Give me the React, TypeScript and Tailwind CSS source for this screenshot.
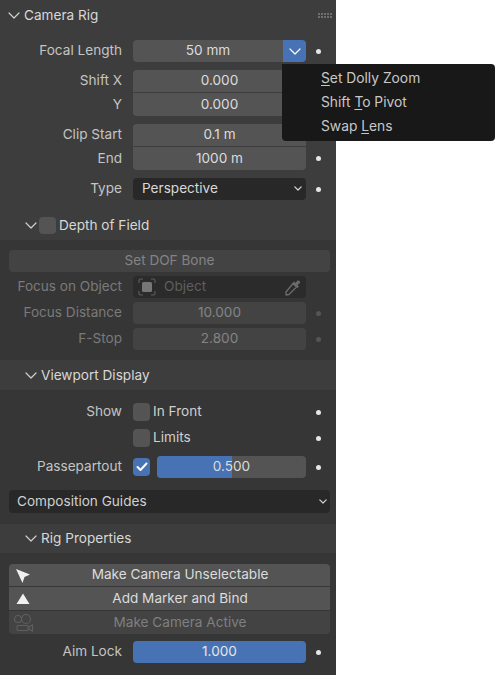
import { ReactNode } from 'react';

function Dot({ dim }: { dim?: boolean }) {
  return (
    <div className="flex w-[24px] justify-center">
      <div className={dim ? 'h-[5px] w-[5px] rounded-full bg-[#555]' : 'h-[5px] w-[5px] rounded-full bg-[#e6e6e6]'} />
    </div>
  );
}

function Chevron({ className }: { className?: string }) {
  return (
    <svg width="12" height="7" viewBox="0 0 12 7" fill="none" className={className}>
      <path d="M1 1 L6 6 L11 1" stroke="currentColor" strokeWidth="1.2" strokeLinecap="round" strokeLinejoin="round" />
    </svg>
  );
}

function SmallChevron() {
  return (
    <svg width="8" height="5" viewBox="0 0 8 5" fill="none">
      <path d="M0.800 0.800 L4 4 L7.200 0.800" stroke="currentColor" strokeWidth="1.200" strokeLinecap="round" strokeLinejoin="round" />
    </svg>
  );
}

function Row({ label, dim, children, dot = true, tall, flat }: { label: string; dim?: boolean; children: ReactNode; dot?: boolean; tall?: boolean; flat?: boolean }) {
  return (
    <div className={tall ? 'flex h-[23px] items-center' : 'flex h-[22px] items-center'}>
      <div className={`w-[122px] text-right ${dim ? 'text-[#7a7a7a]' : 'text-[#c4c4c4]'} ${tall || flat ? '' : 'pb-px'}`}>{label}</div>
      <div className="ml-[11px] h-full w-[173px]">{children}</div>
      {dot ? <Dot dim={dim} /> : null}
    </div>
  );
}

function Field({ value, pos = 'all', dim, flat }: { value: string; pos?: 'all' | 'top' | 'bottom'; dim?: boolean; flat?: boolean }) {
  const radius = pos === 'top' ? 'rounded-t-[4px]' : pos === 'bottom' ? 'rounded-b-[4px]' : 'rounded-[4px]';
  return (
    <div
      className={`flex h-full items-center justify-center ${flat ? '' : 'pb-px'} ${radius} ${dim ? 'bg-[#434343] text-[#838383]' : 'bg-[#545454] text-[#dcdcdc]'}`}
    >
      {value}
    </div>
  );
}

function SubHeader({ children, short }: { children: ReactNode; short?: boolean }) {
  return (
    <div className={`flex items-center bg-[#3d3d3d] pl-[25px] text-[#d8d8d8] ${short ? 'h-[29px]' : 'h-[30px] pt-px'}`}>
      <Chevron className="mr-[4px] text-[#d0d0d0]" />
      {children}
    </div>
  );
}

function Check() {
  return <div className="h-[18px] w-[17px] rounded-[4px] bg-[#545454]" />;
}

function ActionButton({ label, icon, dim, short }: { label: string; icon: ReactNode; dim?: boolean; short?: boolean }) {
  return (
    <div
      className={`relative flex items-center justify-center pl-[21px] ${short ? 'h-[22px] pb-px' : 'h-[23px]'} ${dim ? 'bg-[#434343] text-[#7f7f7f]' : 'bg-[#545454] text-[#dcdcdc]'}`}
    >
      <div className="absolute left-[5px] top-[3px]">{icon}</div>
      {label}
    </div>
  );
}

export default function App() {
  return (
    <div className="relative h-[676px] w-[495px] overflow-hidden bg-white text-[13.6px] leading-none [font-family:Inter,'Liberation_Sans',sans-serif]">
      <div className="h-[675px] w-[336px] rounded-br-[4px] bg-[#3d3d3d]">
        <div className="flex h-[30px] items-center pl-[8px] pr-[4px] pt-px text-[#d8d8d8]">
          <Chevron className="mr-[4px] text-[#d0d0d0]" />
          <span>Camera Rig</span>
          <div className="ml-auto grid grid-cols-5 gap-x-[1px] gap-y-[1px]">
            {[0, 1, 2, 3, 4, 5, 6, 7, 8, 9].map((i) => (
              <div key={i} className="h-[2px] w-[2px] bg-[#6e6e6e]" />
            ))}
          </div>
        </div>

        <div className="mt-[10px]">
          <Row label="Focal Length">
            <div className="flex h-[22px]">
              <div className="flex flex-1 items-center justify-center rounded-l-[4px] bg-[#545454] pb-px text-[#dcdcdc]">50 mm</div>
              <div className="flex w-[23px] items-center justify-center rounded-r-[4px] bg-[#4772b3] text-white">
                <Chevron />
              </div>
            </div>
          </Row>
        </div>
        <div className="mt-[8px]">
          <Row label="Shift X" dot={false}>
            <Field value="0.000" pos="top" />
          </Row>
          <div className="mt-px">
            <Row label="Y" dot={false} tall>
              <Field value="0.000" pos="bottom" flat />
            </Row>
          </div>
        </div>
        <div className="mt-[8px]">
          <Row label="Clip Start" dot={false}>
            <Field value="0.1 m" pos="top" />
          </Row>
          <div className="mt-px">
            <Row label="End" tall>
              <Field value="1000 m" pos="bottom" flat />
            </Row>
          </div>
        </div>
        <div className="mt-[8px]">
          <Row label="Type">
            <div className="flex h-[22px] items-center justify-between rounded-[4px] bg-[#282828] pb-px pl-[9px] pr-[4px] text-[#d8d8d8]">
              <span>Perspective</span>
              <SmallChevron />
            </div>
          </Row>
        </div>

        <div className="mt-[10px]">
          <SubHeader>
            <div className="-ml-[2px] mr-[3px] h-[17px] w-[17px] rounded-[4px] bg-[#545454]" />
            Depth of Field
          </SubHeader>
        </div>

        <div className="h-[120px] bg-[#363636] pt-[10px]">
          <div className="ml-[9px] flex h-[22px] w-[321px] items-center justify-center rounded-[4px] bg-[#434343] pb-px text-[#838383]">Set DOF Bone</div>
          <div className="mt-[4px]">
            <Row label="Focus on Object" dim dot={false}>
              <div className="flex h-full items-center justify-between rounded-[4px] bg-[#2b2b2b] pl-[5px] pr-[4px] text-[#5e5e5e]">
                <div className="flex items-center gap-[8px]">
                  <svg width="18" height="18" viewBox="0 0 18 18" fill="none">
                    <path d="M1 5V2.500A1.500 1.500 0 0 1 2.500 1H5M13 1h2.500A1.500 1.500 0 0 1 17 2.500V5M17 13v2.500a1.500 1.500 0 0 1-1.500 1.500H13M5 17H2.500A1.500 1.500 0 0 1 1 15.500V13" stroke="#5e5e5e" strokeWidth="1.100" />
                    <rect x="4" y="4" width="10" height="10" rx="1.500" fill="#767676" />
                  </svg>
                  <span>Object</span>
                </div>
                <svg width="18" height="18" viewBox="0 0 18 18" fill="none">
                  <path d="M9 5.500 L12.500 9 L5 16.500 L2 17 L2 14 Z" stroke="#6b6b6b" strokeWidth="1.300" strokeLinejoin="round" />
                  <path d="M10 3.500 L11.500 5 L13.500 2.500 A2 2 0 0 1 16 5 L13.500 7 L15 8.500 L13.500 10 L8.500 5 Z" fill="#6b6b6b" />
                </svg>
              </div>
            </Row>
          </div>
          <div className="mt-[4px]">
            <Row label="Focus Distance" dim>
              <Field value="10.000" dim />
            </Row>
          </div>
          <div className="mt-[4px]">
            <Row label="F-Stop" dim>
              <Field value="2.800" dim />
            </Row>
          </div>
        </div>

        <SubHeader>Viewport Display</SubHeader>

        <div className="h-[134px] bg-[#363636] pt-[11px]">
          <Row label="Show">
            <div className="flex h-full items-center gap-[3px] text-[#d0d0d0]">
              <Check />
              <span className="pb-px">In Front</span>
            </div>
          </Row>
          <div className="mt-[4px]">
            <Row label="">
              <div className="flex h-full items-center gap-[3px] text-[#d0d0d0]">
                <Check />
                <span className="pb-px">Limits</span>
              </div>
            </Row>
          </div>
          <div className="mt-[7px]">
            <Row label="Passepartout">
              <div className="flex h-full items-center gap-[7px]">
                <div className="flex h-[18px] w-[17px] items-center justify-center rounded-[4px] bg-[#4772b3]">
                  <svg width="12" height="10" viewBox="0 0 12 10" fill="none">
                    <path d="M1.500 5 L4.500 8 L10.500 1.500" stroke="#fff" strokeWidth="2" strokeLinecap="round" strokeLinejoin="round" />
                  </svg>
                </div>
                <div className="flex h-[22px] flex-1 overflow-hidden rounded-[4px] bg-[#545454]">
                  <div className="relative flex w-full items-center justify-center pb-px text-[#dcdcdc]">
                    <div className="absolute inset-y-0 left-0 w-1/2 bg-[#4772b3]" />
                    <span className="relative">0.500</span>
                  </div>
                </div>
              </div>
            </Row>
          </div>
          <div className="ml-[9px] mt-[12px] flex h-[23px] w-[321px] items-center justify-between rounded-[4px] bg-[#282828] pl-[8px] pr-[3px] text-[#d0d0d0]">
            <span>Composition Guides</span>
            <SmallChevron />
          </div>
        </div>

        <SubHeader short>Rig Properties</SubHeader>

        <div className="h-[122px] bg-[#363636] pt-[11px]">
          <div className="ml-[9px] flex w-[321px] flex-col gap-px overflow-hidden rounded-[4px]">
            <ActionButton
              short
              label="Make Camera Unselectable"
              icon={
                <svg width="18" height="18" viewBox="0 0 18 18">
                  <path d="M2 2 L16 7.500 L10.500 10 L8.500 16 Z" fill="#f0f0f0" />
                </svg>
              }
            />
            <ActionButton
              label="Add Marker and Bind"
              icon={
                <svg width="18" height="18" viewBox="0 0 18 18">
                  <path d="M9 3.500 L15.500 14 L2.500 14 Z" fill="#f0f0f0" />
                </svg>
              }
            />
            <ActionButton
              dim
              label="Make Camera Active"
              icon={
                <svg width="20" height="20" viewBox="0 0 20 20" fill="none" stroke="#5f5f5f" strokeWidth="1.100">
                  <circle cx="4" cy="5" r="3.500" />
                  <circle cx="12" cy="5" r="4.500" />
                  <rect x="3" y="11.500" width="11" height="5" rx="1" />
                  <path d="M14 13.500 L18.500 11 V17 L14 14.500" />
                </svg>
              }
            />
          </div>
          <div className="mt-[7px]">
            <Row label="Aim Lock" flat>
              <div className="flex h-[22px] items-center justify-center rounded-[4px] bg-[#4772b3] text-[#e6e6e6]">1.000</div>
            </Row>
          </div>
        </div>
      </div>

      <div className="absolute left-[282px] top-[64px] h-[77px] w-[213px] rounded-[4px] rounded-tl-none bg-[#181818] pl-[39px] pt-[3px] text-[13.8px] text-[#c8c8c8]">
        <div className="flex h-[24px] items-center">
          <span><span className="underline underline-offset-2">S</span>et Dolly Zoom</span>
        </div>
        <div className="flex h-[24px] items-center">
          <span>Shift <span className="underline underline-offset-2">T</span>o Pivot</span>
        </div>
        <div className="flex h-[24px] items-center">
          <span>Swap <span className="underline underline-offset-2">L</span>ens</span>
        </div>
      </div>
    </div>
  );
}
